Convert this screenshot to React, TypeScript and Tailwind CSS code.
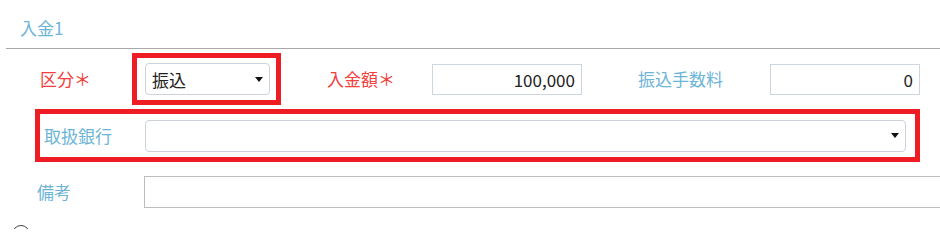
import React from "react";

const Caret = () => (
    <svg width="8" height="5" viewBox="0 0 8 5" className="shrink-0">
        <polygon points="0,0 8,0 4,5" fill="#111" />
    </svg>
);

const Select = ({value, className}: { value?: string; className?: string }) => (
    <div
        className={`flex h-[32px] items-center justify-between rounded-[4px] border border-[#cdd1da] bg-white pl-[6px] pr-[6px] ${className ?? ""}`}>
        <span className="text-[17px] leading-none text-[#222]">{value}</span>
        <Caret/>
    </div>
);

const NumberInput = ({value}: { value: string }) => (
    <div className="flex h-[31px] w-[150px] shrink-0 items-center justify-end border border-[#ccd6e0] bg-white pr-[6px]">
        <span className="text-[17px] leading-none text-[#222]">{value}</span>
    </div>
);

export default function App() {
    return (
        <div
            className="h-[229px] w-[940px] overflow-hidden bg-white"
            style={{fontFamily: '"Noto Sans CJK JP", "Noto Sans", sans-serif'}}>
            {/* 見出し */}
            <div className="ml-[6px] flex h-[49px] items-center border-b border-[#a8a8a8] pl-[14px] pt-[8px]">
                <span className="text-[17px] text-[#6db5d7]">入金1</span>
            </div>

            {/* 区分 / 入金額 / 振込手数料 */}
            <div className="mt-[4px] flex items-center">
                <div className="w-[132px] shrink-0 pl-[40px] text-[17px] text-[#f2403e]">区分＊</div>
                <div className="w-[149px] shrink-0 border-[5px] border-[#ee1d23] py-[5px] pl-[8px] pr-[6px]">
                    <Select value="振込" className="w-[125px]"/>
                </div>
                <div className="ml-[46px] w-[105px] shrink-0 text-[17px] text-[#f2403e]">入金額＊</div>
                <NumberInput value="100,000"/>
                <div className="ml-[56px] w-[132px] shrink-0 text-[17px] text-[#6db5d7]">振込手数料</div>
                <NumberInput value="0"/>
            </div>

            {/* 取扱銀行 */}
            <div
                className="ml-[35px] mt-[4px] flex h-[53px] w-[885px] items-center border-[5px] border-[#ee1d23] pl-[4px] pr-[9px]">
                <div className="w-[101px] shrink-0 text-[17px] text-[#6db5d7]">取扱銀行</div>
                <Select className="flex-1"/>
            </div>

            {/* 備考 */}
            <div className="mt-[14px] flex items-center">
                <div className="w-[144px] shrink-0 pl-[37px] text-[17px] text-[#6db5d7]">備考</div>
                <div className="h-[32px] w-[820px] shrink-0 border border-[#bdbdbd] bg-white"/>
            </div>

            {/* 追加 */}
            <div className="mt-[17px] flex items-start gap-[32px] pl-[12px]">
                <div className="h-[18px] w-[18px] shrink-0 rounded-full border border-[#444]"/>
                <span className="pt-[3px] text-[15px] leading-[18px] text-[#6db5d7]">追加</span>
            </div>
        </div>
    );
}
